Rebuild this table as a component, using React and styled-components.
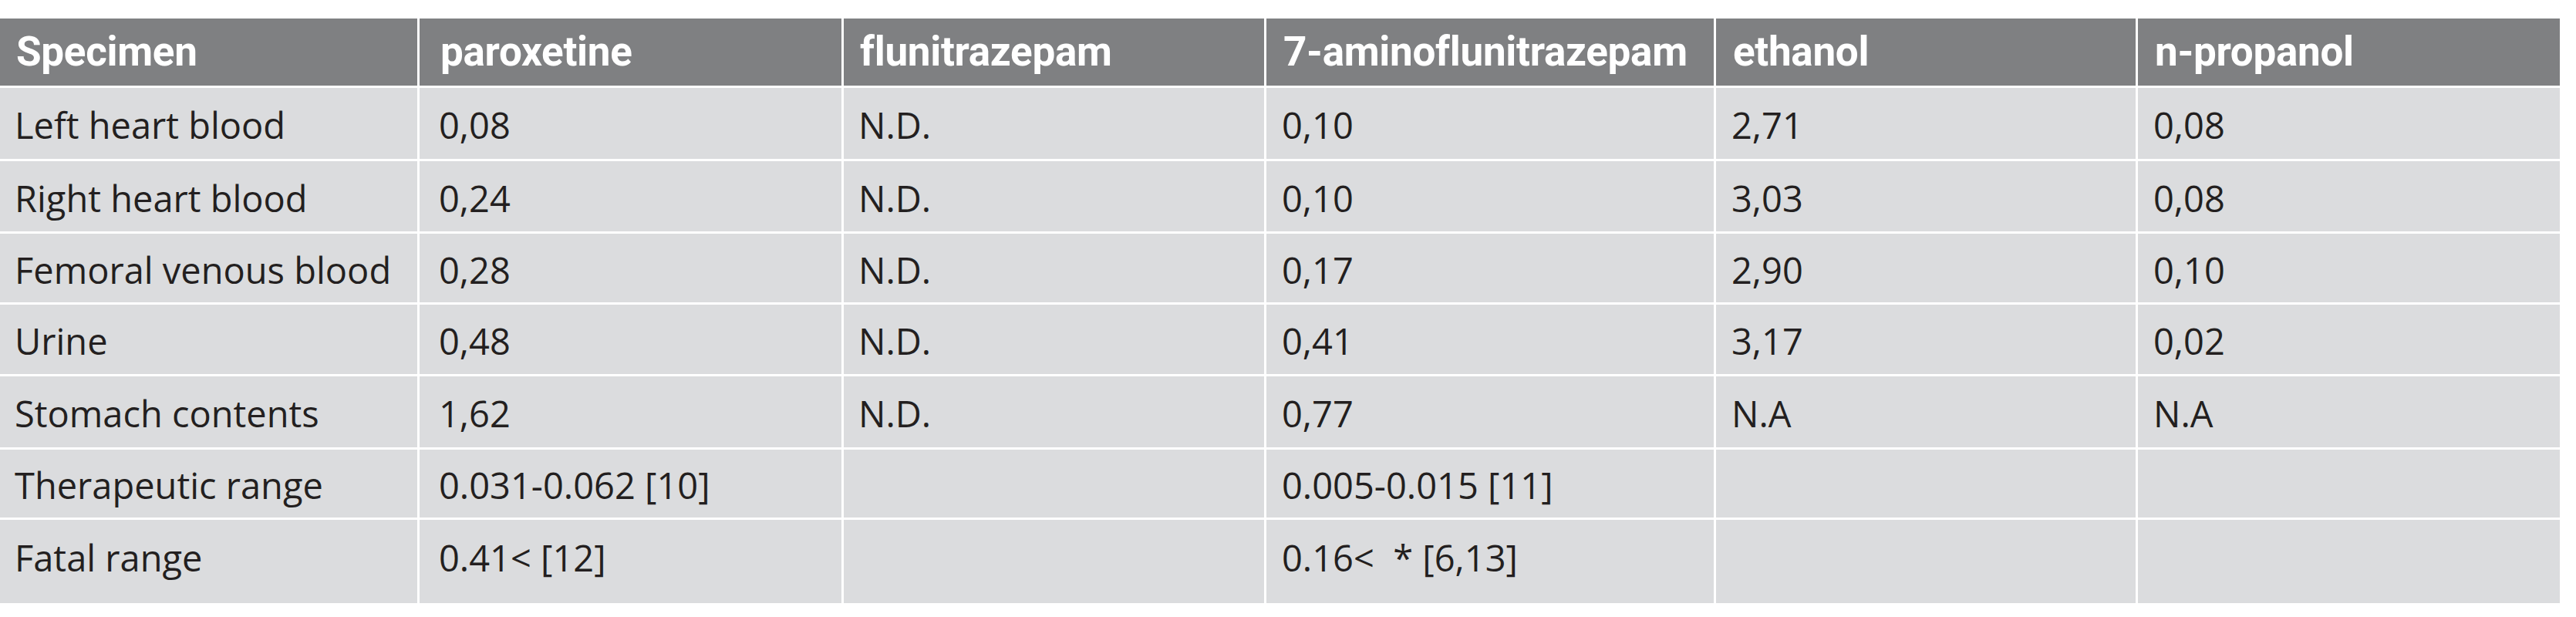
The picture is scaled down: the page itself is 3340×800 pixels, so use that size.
import React from "react";
import styled, { createGlobalStyle } from "styled-components";

const Global = createGlobalStyle`
  html, body { margin: 0; padding: 0; background: #ffffff; }
  body { width: 3340px; height: 800px; overflow: hidden; }
`;

const COLS = "541px 547px 545px 580px 544px 547px";

const Page = styled.div`
  padding-top: 24px;
  width: 3340px;
  box-sizing: border-box;
`;

const Table = styled.div`
  width: 3319px;
  display: flex;
  flex-direction: column;
  gap: 3px;
  background: #ffffff;
`;

const Row = styled.div`
  display: grid;
  grid-template-columns: ${COLS};
  column-gap: 3px;
  height: ${(p) => p.$h}px;
`;

const HeadCell = styled.div`
  background: #7f8082;
  color: #ffffff;
  font-family: Roboto, "Liberation Sans", sans-serif;
  font-weight: 700;
  font-size: 53px;
  letter-spacing: -0.3px;
  display: flex;
  align-items: center;
  padding-left: ${(p) => p.$pad}px;
  padding-bottom: 2px;
  box-sizing: border-box;
  white-space: nowrap;
`;

const Cell = styled.div`
  background: #dbdcde;
  color: #231f20;
  font-family: "Open Sans", "Noto Sans", sans-serif;
  font-size: 47px;
  letter-spacing: 0;
  display: flex;
  align-items: center;
  padding-left: ${(p) => p.$pad}px;
  padding-top: ${(p) => (p.$last ? 0 : 4)}px;
  padding-bottom: ${(p) => (p.$last ? 10 : 0)}px;
  box-sizing: border-box;
  white-space: pre;
`;

const PAD_HEAD = [21, 27, 21, 22, 22, 22];
const PAD_BODY = [19, 25, 19, 20, 20, 20];

const headers = [
  "Specimen",
  "paroxetine",
  "flunitrazepam",
  "7-aminoflunitrazepam",
  "ethanol",
  "n-propanol",
];

const rows = [
  ["Left heart blood", "0,08", "N.D.", "0,10", "2,71", "0,08"],
  ["Right heart blood", "0,24", "N.D.", "0,10", "3,03", "0,08"],
  ["Femoral venous blood", "0,28", "N.D.", "0,17", "2,90", "0,10"],
  ["Urine", "0,48", "N.D.", "0,41", "3,17", "0,02"],
  ["Stomach contents", "1,62", "N.D.", "0,77", "N.A", "N.A"],
  ["Therapeutic range", "0.031-0.062 [10]", "", "0.005-0.015 [11]", "", ""],
  ["Fatal range", "0.41< [12]", "", "0.16<  * [6,13]", "", ""],
];

const heights = [92, 91, 89, 90, 92, 88, 108];

export default function App() {
  return (
    <>
      <Global />
      <Page>
        <Table>
          <Row $h={87}>
            {headers.map((h, i) => (
              <HeadCell key={h} $pad={PAD_HEAD[i]}>
                {h}
              </HeadCell>
            ))}
          </Row>
          {rows.map((r, ri) => (
            <Row key={ri} $h={heights[ri]}>
              {r.map((c, ci) => (
                <Cell key={ci} $pad={PAD_BODY[ci]} $last={ri === rows.length - 1}>
                  {c}
                </Cell>
              ))}
            </Row>
          ))}
        </Table>
      </Page>
    </>
  );
}
